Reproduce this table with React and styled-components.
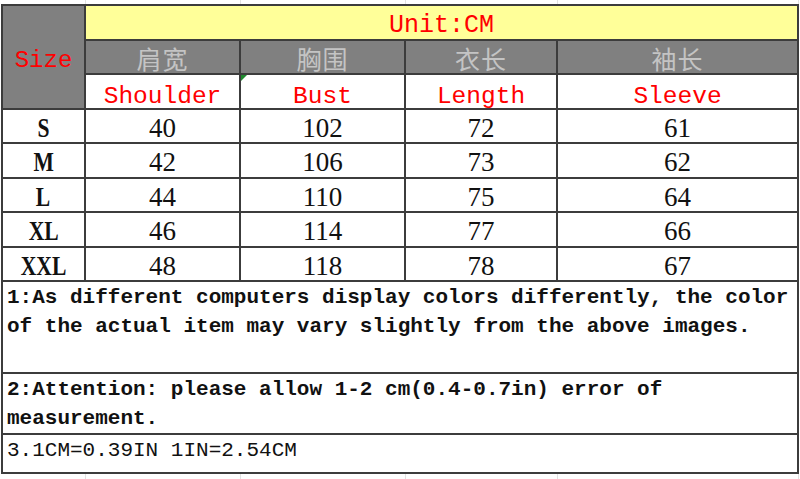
import React from 'react';
import styled, { createGlobalStyle } from 'styled-components';

const line = '#3c3c3c';
const red = '#ff0000';
const headGray = '#808080';
const headText = '#c4c4c4';
const yellow = '#ffff99';
const faint = '#e2e2e2';
const columns = '83px 155px 165px 152px 241px';

const GlobalStyle = createGlobalStyle`
  html, body {
    margin: 0;
    padding: 0;
    background: #ffffff;
  }
`;

const Sheet = styled.div`
  width: 800px;
  height: 479px;
  overflow: hidden;
  background: #ffffff;
`;

const FaintStrip = styled.div`
  display: grid;
  grid-template-columns: ${columns};
  height: ${p => p.h}px;
  padding-left: 3px;
`;

const FaintCell = styled.div`
  border-right: 1px solid ${faint};
`;

const Table = styled.div`
  display: grid;
  grid-template-columns: ${columns};
  grid-template-rows: 35px 34px 35px 34px 35px 34px 35px 34px 92px 61px 39px;
  margin-left: 1px;
  width: 798px;
  box-sizing: border-box;
  border-left: 2px solid ${line};
  border-top: 2px solid ${line};
`;

const Cell = styled.div`
  position: relative;
  box-sizing: border-box;
  border-right: 2px solid ${line};
  border-bottom: 2px solid ${line};
  display: flex;
  align-items: center;
  justify-content: center;
  white-space: nowrap;
`;

const SizeCell = styled(Cell)`
  grid-row: 1 / span 3;
  background: ${headGray};
  color: ${red};
  font-family: 'Liberation Mono', monospace;
  font-size: 24px;
  padding-top: 6px;
`;

const UnitCell = styled(Cell)`
  grid-column: 2 / span 4;
  background: ${yellow};
  color: ${red};
  font-family: 'Liberation Mono', monospace;
  font-size: 25px;
  padding-top: 5px;
`;

const CnCell = styled(Cell)`
  background: ${headGray};
  color: ${headText};
  font-family: 'Noto Sans CJK SC', sans-serif;
  font-size: 25px;
  letter-spacing: 1px;
  padding-top: 2px;
`;

const EnCell = styled(Cell)`
  background: #ffffff;
  color: ${red};
  font-family: 'Liberation Mono', monospace;
  font-size: 24.5px;
  padding-top: 9px;
`;

const Marker = styled.span`
  position: absolute;
  left: 0;
  top: 0;
  width: 0;
  height: 0;
  border-top: 6px solid #1f8a2e;
  border-right: 6px solid transparent;
`;

const SizeLabel = styled(Cell)`
  font-family: 'Liberation Serif', serif;
  font-weight: 700;
  font-size: 27px;
  color: #111111;
  padding-top: 4px;
`;

const Narrow = styled.span`
  display: inline-block;
  transform: scaleX(0.8);
`;

const Value = styled(Cell)`
  font-family: 'Liberation Serif', serif;
  font-size: 27px;
  color: #111111;
  padding-top: 4px;
`;

const Note = styled(Cell)`
  grid-column: 1 / span 5;
  align-items: flex-start;
  justify-content: flex-start;
  white-space: normal;
  padding: 1px 4px 0 4px;
  font-family: 'Liberation Mono', monospace;
  font-size: 21px;
  line-height: 29px;
  font-weight: ${p => (p.bold ? 700 : 400)};
  color: #111111;
`;

const headers = [
  { cn: '肩宽', en: 'Shoulder' },
  { cn: '胸围', en: 'Bust', marker: true },
  { cn: '衣长', en: 'Length' },
  { cn: '袖长', en: 'Sleeve' },
];

const rows = [
  ['S', 40, 102, 72, 61],
  ['M', 42, 106, 73, 62],
  ['L', 44, 110, 75, 64],
  ['XL', 46, 114, 77, 66],
  ['XXL', 48, 118, 78, 67],
];

const Strip = ({ h }) => (
  <FaintStrip h={h}>
    {[0, 1, 2, 3, 4].map(i => (
      <FaintCell key={i} />
    ))}
  </FaintStrip>
);

export default function App() {
  return (
    <Sheet>
      <GlobalStyle />
      <Strip h={4} />
      <Table>
        <SizeCell>Size</SizeCell>
        <UnitCell>Unit:CM</UnitCell>
        {headers.map(h => (
          <CnCell key={h.cn}>{h.cn}</CnCell>
        ))}
        {headers.map(h => (
          <EnCell key={h.en}>
            {h.marker && <Marker />}
            {h.en}
          </EnCell>
        ))}
        {rows.map(([size, ...vals]) => (
          <React.Fragment key={size}>
            <SizeLabel>
              <Narrow>{size}</Narrow>
            </SizeLabel>
            {vals.map((v, i) => (
              <Value key={i}>{v}</Value>
            ))}
          </React.Fragment>
        ))}
        <Note bold>
          1:As different computers display colors differently, the color of the actual item may vary slightly from the above images.
        </Note>
        <Note bold>
          2:Attention: please allow 1-2 cm(0.4-0.7in) error of measurement.
        </Note>
        <Note>3.1CM=0.39IN 1IN=2.54CM</Note>
      </Table>
      <Strip h={6} />
    </Sheet>
  );
}
